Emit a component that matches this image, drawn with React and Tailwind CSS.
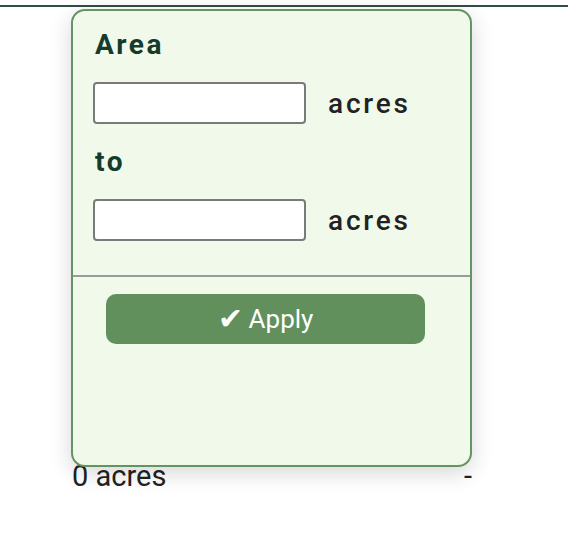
import React from 'react';

const font = { fontFamily: 'Roboto, "Liberation Sans", sans-serif' };

const RangeInput = () => (
    <div className="flex items-center gap-[22px]">
        <input
            type="text"
            className="w-[213px] h-[42px] bg-white border-2 border-[#7a7a7a] rounded-[4px] px-2 text-[20px] focus:outline-none"
        />
        <span className="text-[28px] leading-[31px] font-medium tracking-[0.1em] text-[#222222]">acres</span>
    </div>
);

const AreaFilter = () => {
    return (
        <div className="absolute left-[71px] top-[9px] w-[401px] h-[458px] bg-[#f1f9ea] border-2 border-[#649461] rounded-[14px] shadow-[0_6px_22px_rgba(0,0,0,0.16)] z-10">
            <div className="flex flex-col gap-[22px] pt-[18px] pl-[20px] pb-[34px]">
                <p className="ml-[2px] text-[28px] leading-[31px] font-bold tracking-[0.09em] text-[#143b2c]">Area</p>
                <RangeInput />
                <p className="ml-[2px] text-[28px] leading-[31px] font-bold tracking-[0.09em] text-[#143b2c]">to</p>
                <RangeInput />
            </div>
            <div className="h-[2px] bg-[#9b9b9b]"></div>
            <button className="mt-[17px] ml-[33px] w-[319px] h-[50px] rounded-[10px] bg-[#61905c] text-white text-[26px] flex items-center justify-center gap-[6px]">
                <span className="text-[30px] leading-none">✔</span>
                <span>Apply</span>
            </button>
        </div>
    );
};

export default function App() {
    return (
        <div className="relative w-[568px] h-[540px] bg-white" style={font}>
            <div className="h-[7px] border-b-2 border-[#2e4f43]"></div>
            <div className="h-[452px]"></div>
            <div className="ml-[72px] w-[400px] flex justify-between text-[29px] leading-[34px] text-[#222222]">
                <span>0 acres</span>
                <span>-</span>
            </div>
            <AreaFilter />
        </div>
    );
}
